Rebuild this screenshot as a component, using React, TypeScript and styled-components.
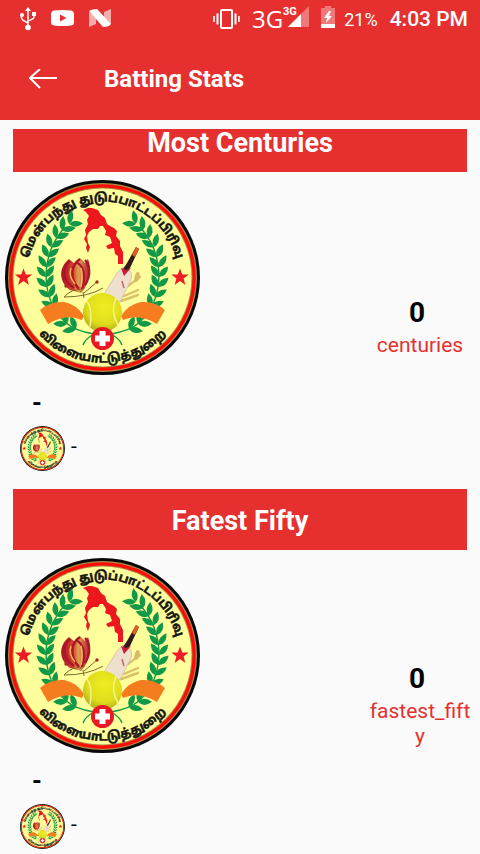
import React, { useId } from "react";
import styled, { createGlobalStyle } from "styled-components";

const RED = "#e63030";

const GlobalStyle = createGlobalStyle`
  * { box-sizing: border-box; }
  body {
    margin: 0;
    background: #fafafa;
    color: #000;
    font-family: Roboto, "Liberation Sans", sans-serif;
    overflow: hidden;
  }
`;

const Screen = styled.div`
  height: 100vh;
  display: flex;
  flex-direction: column;
  overflow: hidden;
`;

const StatusBar = styled.div`
  height: 38px;
  flex: none;
  display: flex;
  align-items: center;
  justify-content: space-between;
  padding: 0 12px 0 20px;
  background: ${RED};
  color: #fff;
`;

const StatusGroup = styled.div<{ $gap: number }>`
  display: flex;
  align-items: center;
  gap: ${(p) => p.$gap}px;
  svg { display: block; flex: none; }
`;

const Network = styled.span`
  display: flex;
  align-items: center;
  font: 400 24px/36px "Open Sans", sans-serif;
`;

const Battery = styled.span`
  font-size: 18px;
`;

const Clock = styled.time`
  font-size: 21px;
  font-weight: 500;
`;

const Toolbar = styled.header`
  height: 82px;
  flex: none;
  display: flex;
  align-items: center;
  gap: 36px;
  padding: 0 18px;
  background: ${RED};
  color: #fff;
`;

const BackButton = styled.button`
  width: 50px;
  height: 48px;
  padding: 0;
  border: 0;
  background: none;
  color: inherit;
  display: grid;
  place-items: center;
`;

const Title = styled.h1`
  margin: 0;
  font-size: 24px;
  line-height: 32px;
  font-weight: 700;
`;

const List = styled.main`
  flex: 1;
  min-height: 0;
  margin-top: 9px;
`;

const Section = styled.section`
  margin-bottom: 18px;
`;

const Banner = styled.h2<{ $scrolled: boolean }>`
  margin: 0 13px 8px;
  height: ${(p) => (p.$scrolled ? 43 : 61)}px;
  padding-top: ${(p) => (p.$scrolled ? 0 : 2)}px;
  display: flex;
  align-items: ${(p) => (p.$scrolled ? "flex-start" : "center")};
  justify-content: center;
  background: ${RED};
  color: #fff;
  font-size: 27px;
  line-height: 28px;
  font-weight: 700;
`;

const Body = styled.div`
  display: flex;
  align-items: center;
  justify-content: space-between;
  padding: 0 6px 0 5px;
`;

const Profile = styled.div`
  svg { display: block; }
`;

const PlayerName = styled.p`
  margin: 13px 0 7px;
  padding-left: 27px;
  font-size: 25px;
  line-height: 31px;
  font-weight: 700;
`;

const Team = styled.div`
  display: flex;
  align-items: flex-start;
  gap: 6px;
  padding-left: 15px;
  font-size: 21px;
  line-height: 40px;
`;

const Score = styled.div`
  width: 108px;
  text-align: center;
`;

const Value = styled.strong`
  display: block;
  padding-right: 6px;
  font-size: 28px;
  line-height: 40px;
`;

const Label = styled.span`
  display: block;
  color: ${RED};
  font-size: 21px;
  line-height: 25px;
  overflow-wrap: anywhere;
`;

const STEM = [
  [64, 44], [57, 50], [51, 58], [46, 67], [43, 77], [41, 87], [41, 97],
  [42, 107], [45, 117], [49, 127], [55, 136], [62, 144], [71, 149],
];

function Branch() {
  return (
    <g>
      <path d="M60 47Q42 67 41 94Q41 124 60 142Q70 151 89 154Q80 159 78 165" fill="none" stroke="#119947" strokeWidth="1.4" />
      {STEM.map(([x, y], i) => {
        const next = STEM[Math.min(i + 1, STEM.length - 1)];
        const prev = STEM[Math.max(i - 1, 0)];
        const a = (Math.atan2(prev[1] - next[1], prev[0] - next[0]) * 180) / Math.PI;
        return (
          <g key={i} transform={`translate(${x} ${y})`} fill="#119947">
            <path d="M0 0Q6 -6 14 0Q6 6 0 0" transform={`rotate(${a - 38})`} />
            <path d="M0 0Q6 -6 14 0Q6 6 0 0" transform={`rotate(${a + 38})`} />
          </g>
        );
      })}
    </g>
  );
}

const STAR = "M0 -9L2.3 -3H8.7L3.6 1L5.4 7.4L0 3.6L-5.4 7.4L-3.6 1L-8.7 -3H-2.3Z";

function Emblem({ size }: { size: number }) {
  const id = useId();
  return (
    <svg width={size} height={size} viewBox="0 0 195 195" role="img" aria-label="Club emblem">
      <defs>
        <path id={`${id}t`} d="M21.5 97.5A76 76 0 0 1 173.5 97.5" />
        <path id={`${id}b`} d="M12.5 97.5A85 85 0 0 0 182.5 97.5" />
        <radialGradient id={`${id}g`} cx="0.55" cy="0.35" r="0.7">
          <stop offset="0" stopColor="#f0ee20" />
          <stop offset="0.65" stopColor="#dfdc1c" />
          <stop offset="1" stopColor="#a5a51c" />
        </radialGradient>
        <linearGradient id={`${id}f`} x1="0" x2="1">
          <stop offset="0" stopColor="#a3122a" />
          <stop offset="0.4" stopColor="#d5402a" />
          <stop offset="0.6" stopColor="#e0a050" />
          <stop offset="1" stopColor="#b3152b" />
        </linearGradient>
      </defs>
      <circle cx="97.5" cy="97.5" r="97.5" fill="#080808" />
      <circle cx="97.5" cy="97.5" r="94.5" fill="#b08a45" />
      <circle cx="97.5" cy="97.5" r="93.3" fill="#fb0d08" />
      <circle cx="97.5" cy="97.5" r="90" fill="#b08a45" />
      <circle cx="97.5" cy="97.5" r="89" fill="#ffff9b" />
      <g fontFamily='"Noto Sans Tamil", "Lohit Tamil", "Noto Sans", sans-serif' fontWeight="700" fill="#15150f" stroke="#15150f" strokeWidth="0.5" textAnchor="middle">
        <text fontSize="12"><textPath href={`#${id}t`} startOffset="50%">மென்பந்து துடுப்பாட்டப்பிரிவு</textPath></text>
        <text fontSize="12"><textPath href={`#${id}b`} startOffset="50%">விளையாட்டுத்துறை</textPath></text>
      </g>
      <Branch />
      <g transform="translate(195 0) scale(-1 1)"><Branch /></g>
      <path d={STAR} transform="translate(18.5 97.5)" fill="#ef1b24" />
      <path d={STAR} transform="translate(175 97.5)" fill="#ef1b24" />
      <path d="M78 30L83 28L87 28L93 30L96 35L100 38L102 44L105 46L109 48L112 51L111 56L115 61L115 66L118 72V84H113V76L110 74L109 68L103 69L101 66L107 63L105 57L100 55L101 51L98 46L95 46L93 49L88 49L84 52L82 56L83 63L85 67L83 73L81 68L82 64L79 59L81 55L80 50L83 44L82 40L84 36L81 32Z" fill="#ee171e" />
      <g>
        <path d="M65 110C53 101 54 87 64 79L70 84L75 78L80 83L83 79C87 89 84 99 80 108L76 113Z" fill={`url(#${id}f)`} />
        <path d="M69 108C57 100 57 88 65 81M74 109C64 98 66 85 75 79M77 109C81 96 79 86 71 82M80 105C87 94 84 84 80 80" fill="none" stroke="#ae142a" strokeWidth="2.4" />
        <path d="M70 104Q63 96 66 88M76 107Q78 97 76 88" fill="none" stroke="#f1b653" strokeWidth="1.6" />
        <path d="M78 112L79 118M77 110Q67 108 59 117Q83 117 98 108M79 113L92 102" fill="none" stroke="#806929" strokeWidth="1" />
        <circle cx="61" cy="106" r="1.7" fill="#a42922" />
        <circle cx="92" cy="102" r="1.7" fill="#a42922" />
      </g>
      <path d="M119 116L133 110M116 121L133 115M123 106L135 97" stroke="#dcc16b" strokeWidth="2.4" strokeLinecap="round" />
      <ellipse cx="132" cy="97" rx="2.4" ry="5" transform="rotate(15 132 97)" fill="#d5bb6c" />
      <path d="M99 114L112 93Q115 88 120 87L126 92Q128 97 125 102L115 122Z" fill="#eee0cc" stroke="#cbb9a2" strokeWidth="0.7" />
      <path d="M119 95L118 89L122 83L131 67L134 69L125 88Z" fill="#351921" />
      <path d="M131 67L134 69L130 77L127 75Z" fill="#e35c20" />
      <path d="M116 88L119 96L126 88L121 90Z" fill="#c91b36" />
      <path d="M117 101L119 108" stroke="#ba6973" strokeWidth="1.5" />
      <path d="M35 130Q45 121 59 122Q71 124 79 136L77 140Q61 133 43 144Z" fill="#f57c1f" />
      <path d="M160 130Q150 121 136 122Q124 124 116 136L118 140Q134 133 152 144Z" fill="#f57c1f" />
      <circle cx="97.5" cy="132.5" r="19.5" fill={`url(#${id}g)`} />
      <path d="M82 121Q88 129 85 147M111 118Q105 132 113 145" fill="none" stroke="#f5f48c" strokeWidth="1.5" />
      <circle cx="97.5" cy="158.5" r="11.5" fill="#e81924" />
      <path d="M94.5 151H100.500V155.500H105V161.500H100.500V166H94.500V161.500H90V155.500H94.500Z" fill="#fff" />
    </svg>
  );
}

function UsbIcon() {
  return (
    <svg width="16" height="24" viewBox="0 0 16 24" fill="none" stroke="#fff" strokeWidth="1.5">
      <path d="M8 3V20M1.500 8V11Q1.500 13 8 16M14 7V10Q14 12 8 14" />
      <path d="M8 0L11 4H5Z" fill="#fff" stroke="none" />
      <circle cx="8" cy="20.500" r="2.800" fill="#fff" stroke="none" />
      <circle cx="2" cy="8" r="2" fill="#fff" stroke="none" />
      <path d="M12 5H16V9H12Z" fill="#fff" stroke="none" />
    </svg>
  );
}

function YoutubeIcon() {
  return (
    <svg width="23" height="18" viewBox="0 0 23 18">
      <path d="M3 0.500Q11.500 -0.500 20 0.500Q23 1 23 4V12Q23 15 20 15.500Q11.500 16.500 3 15.500Q0 15 0 12V4Q0 1 3 0.500Z" fill="#fff" />
      <path d="M9 4.500L15.500 8L9 11.500Z" fill={RED} />
    </svg>
  );
}

function NougatIcon() {
  return (
    <svg width="22" height="20" viewBox="0 0 22 20" fill="#fff">
      <path d="M0 3L7 8V15L0 18ZM22 0V15L15 10V3Z" opacity="0.6" />
      <path d="M0 2Q3 0 8 0L22 15L20 17Q17 18 14 18Z" />
    </svg>
  );
}

function VibrateIcon() {
  return (
    <svg width="27" height="20" viewBox="0 0 27 20" fill="none" stroke="#fff">
      <rect x="8" y="1" width="11" height="18" rx="1" strokeWidth="2" />
      <path d="M4.500 4.500V15.500M22.500 4.500V15.500" strokeWidth="2" />
      <path d="M1 7V13M26 7V13" strokeWidth="1.600" />
    </svg>
  );
}

function SignalIcon() {
  return (
    <svg width="26" height="26" viewBox="0 0 26 26">
      <path d="M26 0V21H5Z" fill="#fff" opacity="0.35" />
      <path d="M18 8V21H5Z" fill="#fff" />
      <text x="0" y="9" fontFamily="Roboto, sans-serif" fontSize="11" fontWeight="700" fill="#fff">3G</text>
    </svg>
  );
}

function BatteryIcon() {
  return (
    <svg width="14" height="26" viewBox="0 0 14 26" fill="#fff">
      <path d="M0 2H4V0H10V2H14V18H0Z" opacity="0.35" />
      <path d="M0 18H14V22H0Z" />
      <path d="M8 5L3 12H6L5 17L11 10H8L10 5Z" />
    </svg>
  );
}

function StatSection({ title, label, scrolled = false }: { title: string; label: string; scrolled?: boolean }) {
  return (
    <Section>
      <Banner $scrolled={scrolled}>{title}</Banner>
      <Body>
        <Profile>
          <Emblem size={195} />
          <PlayerName>-</PlayerName>
          <Team><Emblem size={45} />-</Team>
        </Profile>
        <Score>
          <Value>0</Value>
          <Label>{label}</Label>
        </Score>
      </Body>
    </Section>
  );
}

export default function App() {
  return (
    <Screen>
      <GlobalStyle />
      <StatusBar>
        <StatusGroup $gap={15}>
          <UsbIcon />
          <YoutubeIcon />
          <NougatIcon />
        </StatusGroup>
        <StatusGroup $gap={12}>
          <VibrateIcon />
          <Network>3G<SignalIcon /></Network>
          <StatusGroup $gap={9}>
            <BatteryIcon />
            <Battery>21%</Battery>
          </StatusGroup>
          <Clock>4:03 PM</Clock>
        </StatusGroup>
      </StatusBar>
      <Toolbar>
        <BackButton type="button" aria-label="Back">
          <svg width="28" height="20" viewBox="0 0 28 20" fill="none" stroke="#fff" strokeWidth="2">
            <path d="M28 9H1M11 0L1 9L11 19" />
          </svg>
        </BackButton>
        <Title>Batting Stats</Title>
      </Toolbar>
      <List>
        <StatSection title="Most Centuries" label="centuries" scrolled />
        <StatSection title="Fatest Fifty" label="fastest_fifty" />
      </List>
    </Screen>
  );
}
